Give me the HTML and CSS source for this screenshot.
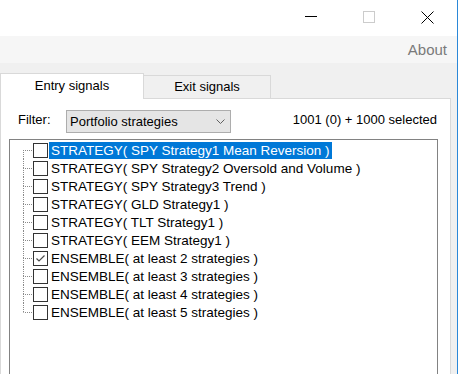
FILE: index.html
```html
<!DOCTYPE html>
<html>
<head>
<meta charset="utf-8">
<link rel="stylesheet" href="styles.css">
</head>
<body>
<div class="window">
  <div class="titlebar">
    <div class="cap-btn min"><div class="min-bar"></div></div>
    <div class="cap-btn"><svg width="13" height="13" viewBox="0 0 13 13"><rect x="0.5" y="0.5" width="11" height="11" fill="none" stroke="#cccccc" stroke-width="1"/></svg></div>
    <div class="cap-btn"><svg width="13" height="13" viewBox="0 0 13 13"><path d="M0.5 0.5 L12.5 12.5 M12.5 0.5 L0.5 12.5" stroke="#000" stroke-width="1" fill="none"/></svg></div>
  </div>
  <div class="menubar"><span class="menu-item">About</span></div>
  <div class="content">
    <div class="tabs">
      <div class="tab active">Entry signals</div>
      <div class="tab inactive">Exit signals</div>
    </div>
    <div class="page">
      <div class="filter-row">
        <span class="filter-label">Filter:</span>
        <div class="combo">
          <span>Portfolio strategies</span>
          <svg width="9" height="5" viewBox="0 0 9 5"><polyline points="0.5,0.5 4.5,4.5 8.5,0.5" fill="none" stroke="#606060" stroke-width="1"/></svg>
        </div>
        <span class="count">1001 (0) + 1000 selected</span>
      </div>
      <div class="tree">
        <div class="row first"><span class="twig"><span class="up"></span><span class="down"></span></span><span class="box"></span><span class="label sel">STRATEGY( SPY Strategy1 Mean Reversion )</span></div>
        <div class="row"><span class="twig"><span class="up"></span><span class="down"></span></span><span class="box"></span><span class="label">STRATEGY( SPY Strategy2 Oversold and Volume )</span></div>
        <div class="row"><span class="twig"><span class="up"></span><span class="down"></span></span><span class="box"></span><span class="label">STRATEGY( SPY Strategy3 Trend )</span></div>
        <div class="row"><span class="twig"><span class="up"></span><span class="down"></span></span><span class="box"></span><span class="label">STRATEGY( GLD Strategy1 )</span></div>
        <div class="row"><span class="twig"><span class="up"></span><span class="down"></span></span><span class="box"></span><span class="label">STRATEGY( TLT Strategy1 )</span></div>
        <div class="row"><span class="twig"><span class="up"></span><span class="down"></span></span><span class="box"></span><span class="label">STRATEGY( EEM Strategy1 )</span></div>
        <div class="row"><span class="twig"><span class="up"></span><span class="down"></span></span><span class="box"><svg width="13" height="13" viewBox="0 0 13 13"><polyline points="2.5,6.5 5,9 10.5,3.5" fill="none" stroke="#4d4d4d" stroke-width="1.2"/></svg></span><span class="label">ENSEMBLE( at least 2 strategies )</span></div>
        <div class="row"><span class="twig"><span class="up"></span><span class="down"></span></span><span class="box"></span><span class="label">ENSEMBLE( at least 3 strategies )</span></div>
        <div class="row"><span class="twig"><span class="up"></span><span class="down"></span></span><span class="box"></span><span class="label">ENSEMBLE( at least 4 strategies )</span></div>
        <div class="row last"><span class="twig"><span class="up"></span><span class="down"></span></span><span class="box"></span><span class="label">ENSEMBLE( at least 5 strategies )</span></div>
      </div>
    </div>
  </div>
</div>
</body>
</html>
```

FILE: styles.css
```css
html, body {
  margin: 0;
  padding: 0;
}
body {
  background: #ffffff;
  width: 459px;
  height: 374px;
  overflow: hidden;
  font-family: "Liberation Sans", Arial, sans-serif;
  font-size: 13px;
  color: #000;
}
.window {
  width: 457px;
  height: 374px;
  border-right: 1px solid #2b88d8;
  display: flex;
  flex-direction: column;
  background: #f0f0f0;
}
.titlebar {
  height: 36px;
  flex: none;
  background: #ffffff;
  display: flex;
  justify-content: flex-end;
}
.cap-btn {
  width: 58px;
  height: 36px;
  flex: none;
  box-sizing: border-box;
  padding: 11px 0 0 22px;
}
.cap-btn svg {
  display: block;
}
.min-bar {
  width: 12px;
  height: 1px;
  margin-top: 5px;
  background: #000000;
}
.menubar {
  height: 27px;
  flex: none;
  background: #f6f6f6;
  display: flex;
  justify-content: flex-end;
  align-items: center;
  padding-right: 10px;
}
.menu-item {
  color: #7a7a7a;
  font-size: 15px;
}
.content {
  flex: 1;
  padding-top: 10px;
  padding-right: 6px;
  overflow: hidden;
}
.tabs {
  display: flex;
  align-items: flex-end;
  height: 25px;
}
.tab {
  box-sizing: border-box;
  text-align: center;
  border: 1px solid #d9d9d9;
  border-bottom: none;
}
.tab.active {
  width: 144px;
  height: 26px;
  margin-bottom: -1px;
  background: #ffffff;
  line-height: 23px;
  position: relative;
  z-index: 1;
}
.tab.inactive {
  width: 127px;
  height: 23px;
  border-left: none;
  line-height: 22px;
  background: #f0f0f0;
}
.page {
  width: 451px;
  height: 300px;
  box-sizing: border-box;
  background: #ffffff;
  border: 1px solid #d9d9d9;
  padding: 11px 13px 0 0;
}
.filter-row {
  display: flex;
  align-items: flex-start;
  height: 23px;
}
.filter-label {
  width: 48px;
  padding-left: 17px;
  line-height: 19px;
}
.combo {
  width: 165px;
  height: 23px;
  box-sizing: border-box;
  border: 1px solid #adadad;
  background: #e5e5e5;
  display: flex;
  align-items: center;
  justify-content: space-between;
  padding: 0 5px 0 3px;
}
.combo svg {
  display: block;
}
.count {
  margin-left: auto;
  line-height: 19px;
}
.tree {
  margin: 6px 0 0 8px;
  width: 429px;
  height: 260px;
  box-sizing: border-box;
  border: 1px solid #828282;
  border-bottom: none;
  padding-top: 1px;
  font-size: 13.5px;
}
.row {
  display: flex;
  align-items: center;
  height: 18px;
}
.twig {
  width: 23px;
  align-self: stretch;
  box-sizing: border-box;
  padding-left: 13px;
  display: flex;
  flex-direction: column;
}
.up {
  height: 9px;
  border-left: 1px dotted #8a8a8a;
}
.down {
  flex: 1;
  width: 10px;
  border-left: 1px dotted #8a8a8a;
  border-top: 1px dotted #8a8a8a;
}
.row.first .up {
  border-left: none;
  margin-left: 1px;
}
.row.last .down {
  border-left-color: transparent;
}
.box {
  width: 15px;
  height: 15px;
  box-sizing: border-box;
  border: 1px solid #333333;
  background: #ffffff;
  flex: none;
}
.box svg {
  display: block;
}
.label {
  margin-left: 1px;
  padding: 0 2px;
  line-height: 17px;
  white-space: nowrap;
}
.label.sel {
  background: #0078d7;
  color: #ffffff;
}
```
